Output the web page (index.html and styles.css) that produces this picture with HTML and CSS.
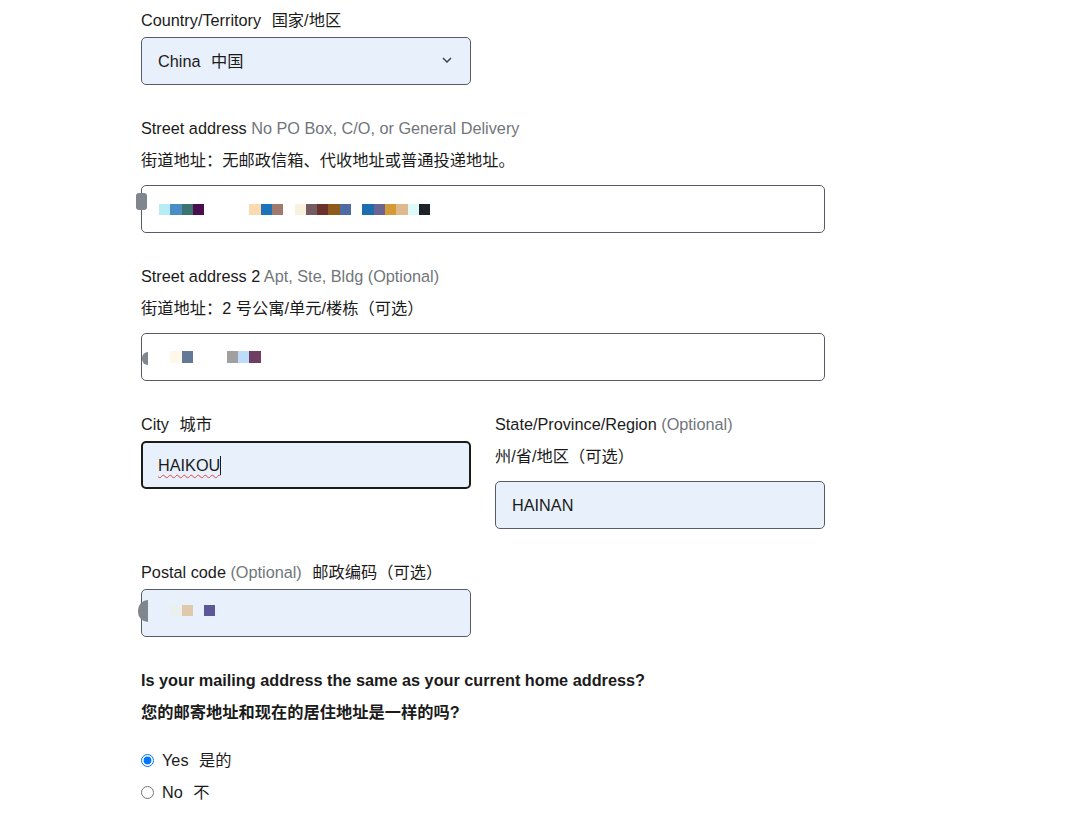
FILE: index.html
```html
<!DOCTYPE html>
<html lang="en">
<head>
	<meta charset="UTF-8">
	<meta name="viewport" content="width=device-width, initial-scale=1.0">
	<title>Address</title>
	<link rel="stylesheet" href="styles.css">
</head>
<body>
	<div class="form">

		<div class="group">
			<div class="label">Country/Territory <span class="zh">国家/地区</span></div>
			<div class="field select filled">
				<span>China <span class="zh">中国</span></span>
				<svg class="chevron" width="10" height="6" viewBox="0 0 10 6"><path d="M1 1 L5 5 L9 1" fill="none" stroke="#3d4551" stroke-width="1.5"/></svg>
			</div>
		</div>

		<div class="group">
			<div class="label">Street address <span class="hint">No PO Box, C/O, or General Delivery</span></div>
			<div class="label second">街道地址：无邮政信箱、代收地址或普通投递地址。</div>
			<div class="field">
				<span class="knob square"></span>
				<div class="mosaic">
					<i style="background:#b8ecf5"></i><i style="background:#4a8cc4"></i><i style="background:#3b7370"></i><i style="background:#4a0d50"></i>
					<i></i><i></i><i></i><i></i>
					<i style="background:#fdd9b0"></i><i style="background:#1e72b8"></i><i style="background:#a0786c"></i>
					<i></i>
					<i style="background:#f8f2dc"></i><i style="background:#735c63"></i><i style="background:#6b322c"></i><i style="background:#8f5a1c"></i><i style="background:#4e6ba4"></i>
					<i></i>
					<i style="background:#1e6cb0"></i><i style="background:#6a6590"></i><i style="background:#d49a35"></i><i style="background:#e0b88d"></i><i style="background:#dcfafa"></i><i style="background:#1d222b"></i>
				</div>
			</div>
		</div>

		<div class="group">
			<div class="label">Street address 2 <span class="hint">Apt, Ste, Bldg (Optional)</span></div>
			<div class="label second">街道地址：2 号公寓/单元/楼栋（可选）</div>
			<div class="field">
				<span class="knob round"></span>
				<div class="mosaic tall">
					<i></i>
					<i style="background:#fdf8e8"></i><i style="background:#627a96"></i>
					<i></i><i></i><i></i>
					<i style="background:#a0a0a0"></i><i style="background:#bcdcfa"></i><i style="background:#6e3f63"></i>
				</div>
			</div>
		</div>

		<div class="group row">
			<div class="col">
				<div class="label">City <span class="zh">城市</span></div>
				<div class="field filled focused"><span class="spell">HAIKOU</span><span class="caret"></span></div>
			</div>
			<div class="col">
				<div class="label">State/Province/Region <span class="hint">(Optional)</span></div>
				<div class="label second">州/省/地区（可选）</div>
				<div class="field filled">HAINAN</div>
			</div>
		</div>

		<div class="group">
			<div class="label">Postal code <span class="hint">(Optional)</span> <span class="zh">邮政编码（可选）</span></div>
			<div class="field filled half">
				<span class="knob round big"></span>
				<div class="mosaic up">
					<i></i>
					<i style="background:#eaf0ee"></i><i style="background:#e0c8aa"></i>
					<i></i>
					<i style="background:#5c5898"></i>
				</div>
			</div>
		</div>

		<div class="question">
			<div class="qline">Is your mailing address the same as your current home address?</div>
			<div class="qline second">您的邮寄地址和现在的居住地址是一样的吗?</div>
			<label class="radio"><input type="radio" name="same" checked><span>Yes <span class="zh">是的</span></span></label>
			<label class="radio"><input type="radio" name="same"><span>No <span class="zh">不</span></span></label>
		</div>

	</div>
</body>
</html>
```

FILE: styles.css
```css
body {
	margin:0;
	background:#fff;
	color:#1b1b1b;
	font-family:"Liberation Sans", Arial, "Noto Sans CJK SC", sans-serif;
	font-size:16.25px;
}

.form {
	width:684px;
	margin-left:141px;
	padding-top:10px;
}

.group {
	margin-bottom:33px;
}

.label {
	line-height:20px;
	margin-bottom:7px;
}
.label .zh {
	margin-left:6px;
}
.label.second {
	margin-top:-7px;
	padding-top:12px;
	margin-bottom:15px;
}
.hint {
	color:#71767a;
}

.field {
	position:relative;
	box-sizing:border-box;
	height:48px;
	border:1px solid #565c65;
	border-radius:5px;
	background:#fff;
	padding:0 16px;
	display:flex;
	align-items:center;
	font-size:16.25px;
}
.field.filled {
	background:#e8f0fb;
}
.field.half {
	width:330px;
}
.field.focused {
	border:2px solid #1b1b1b;
	padding-left:15px;
}

.select {
	width:330px;
	justify-content:space-between;
	padding-bottom:2px;
}
.select .zh {
	margin-left:6px;
}
.chevron {
	margin-right:2px;
}

.spell {
	text-decoration:underline wavy #e0443e;
	text-decoration-thickness:1px;
	text-underline-offset:3px;
}
.caret {
	display:inline-block;
	width:1px;
	height:19px;
	background:#1b1b1b;
}

.row {
	display:grid;
	grid-template-columns:330px 330px;
	column-gap:24px;
	align-items:start;
}

/* redacted text */
.mosaic {
	display:flex;
	margin-left:1px;
}
.mosaic.up {
	margin-top:-6px;
}
.mosaic i {
	display:block;
	width:11.3px;
	height:11px;
}
.mosaic.tall i {
	height:12px;
}

.knob {
	position:absolute;
	background:#7f868d;
}
.knob.square {
	left:-6px;
	top:7px;
	width:11px;
	height:17px;
	border-radius:3px;
}
.knob.round {
	left:0;
	top:18px;
	width:6px;
	height:13px;
	border-radius:7px 0 0 7px;
}
.knob.round.big {
	left:-4px;
	top:10px;
	width:10px;
	height:22px;
	border-radius:11px 0 0 11px;
}

.qline {
	font-weight:bold;
	line-height:20px;
}
.qline.second {
	margin-top:12px;
	margin-bottom:28px;
}

.radio {
	display:flex;
	align-items:center;
	height:20px;
	line-height:20px;
	margin-bottom:12px;
}
.radio input {
	width:13px;
	height:13px;
	margin:0 8px 0 0;
	accent-color:#0075ff;
}
.radio .zh {
	margin-left:6px;
}
```
